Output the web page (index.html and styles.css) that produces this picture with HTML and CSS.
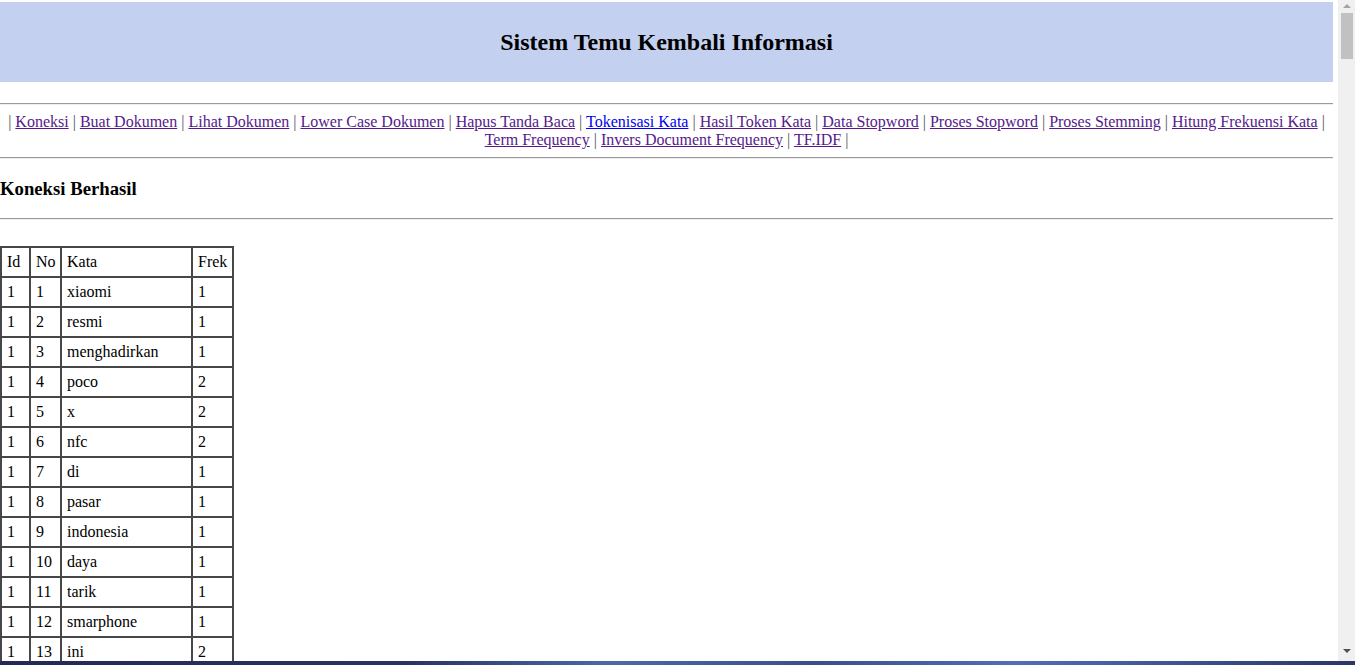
FILE: index.html
```html
<!DOCTYPE html>
<html>
<head>
<meta charset="utf-8">
<title>Sistem Temu Kembali Informasi</title>
<link rel="stylesheet" href="styles.css">
</head>
<body>
<div class="page">
  <div class="header"><h2 class="title">Sistem Temu Kembali Informasi</h2></div>
  <hr class="rule first">
  <div class="nav">
    <span class="sep">|</span> <a class="v" href="#">Koneksi</a> <span class="sep">|</span> <a class="v" href="#">Buat Dokumen</a> <span class="sep">|</span> <a class="v" href="#">Lihat Dokumen</a> <span class="sep">|</span> <a class="v" href="#">Lower Case Dokumen</a> <span class="sep">|</span> <a class="v" href="#">Hapus Tanda Baca</a> <span class="sep">|</span> <a class="u" href="#">Tokenisasi Kata</a> <span class="sep">|</span> <a class="v" href="#">Hasil Token Kata</a> <span class="sep">|</span> <a class="v" href="#">Data Stopword</a> <span class="sep">|</span> <a class="v" href="#">Proses Stopword</a> <span class="sep">|</span> <a class="v" href="#">Proses Stemming</a> <span class="sep">|</span> <a class="v" href="#">Hitung Frekuensi Kata</a> <span class="sep">|</span> <a class="v" href="#">Term Frequency</a> <span class="sep">|</span> <a class="v" href="#">Invers Document Frequency</a> <span class="sep">|</span> <a class="v" href="#">TF.IDF</a> <span class="sep">|</span>
  </div>
  <hr class="rule">
  <h3 class="status">Koneksi Berhasil</h3>
  <hr class="rule">
  <table class="grid">
    <colgroup><col class="c-id"><col class="c-no"><col class="c-kata"><col class="c-frek"></colgroup>
    <tr><td>Id</td><td>No</td><td>Kata</td><td>Frek</td></tr>
    <tr><td>1</td><td>1</td><td>xiaomi</td><td>1</td></tr>
    <tr><td>1</td><td>2</td><td>resmi</td><td>1</td></tr>
    <tr><td>1</td><td>3</td><td>menghadirkan</td><td>1</td></tr>
    <tr><td>1</td><td>4</td><td>poco</td><td>2</td></tr>
    <tr><td>1</td><td>5</td><td>x</td><td>2</td></tr>
    <tr><td>1</td><td>6</td><td>nfc</td><td>2</td></tr>
    <tr><td>1</td><td>7</td><td>di</td><td>1</td></tr>
    <tr><td>1</td><td>8</td><td>pasar</td><td>1</td></tr>
    <tr><td>1</td><td>9</td><td>indonesia</td><td>1</td></tr>
    <tr><td>1</td><td>10</td><td>daya</td><td>1</td></tr>
    <tr><td>1</td><td>11</td><td>tarik</td><td>1</td></tr>
    <tr><td>1</td><td>12</td><td>smarphone</td><td>1</td></tr>
    <tr><td>1</td><td>13</td><td>ini</td><td>2</td></tr>
  </table>
</div>
<div class="scrollbar">
  <div class="arrow up"></div>
  <div class="thumb"></div>
  <div class="track"></div>
  <div class="arrow down"></div>
</div>
<div class="taskbar"></div>
</body>
</html>
```
FILE: styles.css
```css
body {
  margin: 0;
  font-family: "Liberation Serif", "Times New Roman", serif;
  font-size: 16px;
  color: #000;
  background: #fff;
}
.page {
  width: 1333px;
  padding-top: 2px;
}
.header {
  height: 80px;
  background: #c3d0ef;
  display: flex;
  align-items: center;
  justify-content: center;
}
.title {
  margin: 0;
  font-size: 24px;
  font-weight: bold;
}
.rule {
  margin: 8px 0;
  border: 0;
  border-top: 1px solid #9a9a9a;
  border-bottom: 1px solid #eeeeee;
  height: 0;
}
.rule.first {
  margin-top: 21px;
}
.nav {
  text-align: center;
  line-height: 18px;
}
.nav a.v {
  color: #551a8b;
}
.nav a.u {
  color: #0000ee;
}
.sep {
  color: #555;
}
.status {
  font-size: 18.72px;
  margin: 18.72px 0;
  line-height: 22px;
}
.grid {
  margin-top: 26px;
  border-collapse: collapse;
  table-layout: fixed;
  width: 232px;
  border: 2px solid #474747;
}
.grid td {
  border: 2px solid #474747;
  padding: 5px 4px 5px 5px;
  line-height: 18px;
  white-space: nowrap;
}
.c-id { width: 29px; }
.c-no { width: 31px; }
.c-kata { width: 131px; }
.c-frek { width: 41px; }
.scrollbar {
  position: fixed;
  top: 0;
  right: 0;
  bottom: 4px;
  width: 17px;
  background: #f0f0f0;
  display: flex;
  flex-direction: column;
  align-items: center;
}
.arrow {
  width: 0;
  height: 0;
  border-left: 4px solid transparent;
  border-right: 4px solid transparent;
  margin: 4px 0;
}
.arrow.up {
  border-bottom: 4px solid #a3a3a3;
}
.arrow.down {
  border-top: 4px solid #505050;
  margin-bottom: 8px;
}
.thumb {
  width: 12px;
  height: 46px;
  background: #c1c1c1;
  margin-top: 1px;
}
.track {
  flex: 1;
}
.taskbar {
  position: fixed;
  left: 0;
  right: 0;
  bottom: 0;
  height: 4px;
  background: linear-gradient(90deg, #232a55 0%, #2a3264 30%, #4a6aa8 45%, #3a4f8a 60%, #4f6fb8 75%, #2b3566 100%);
}
```
